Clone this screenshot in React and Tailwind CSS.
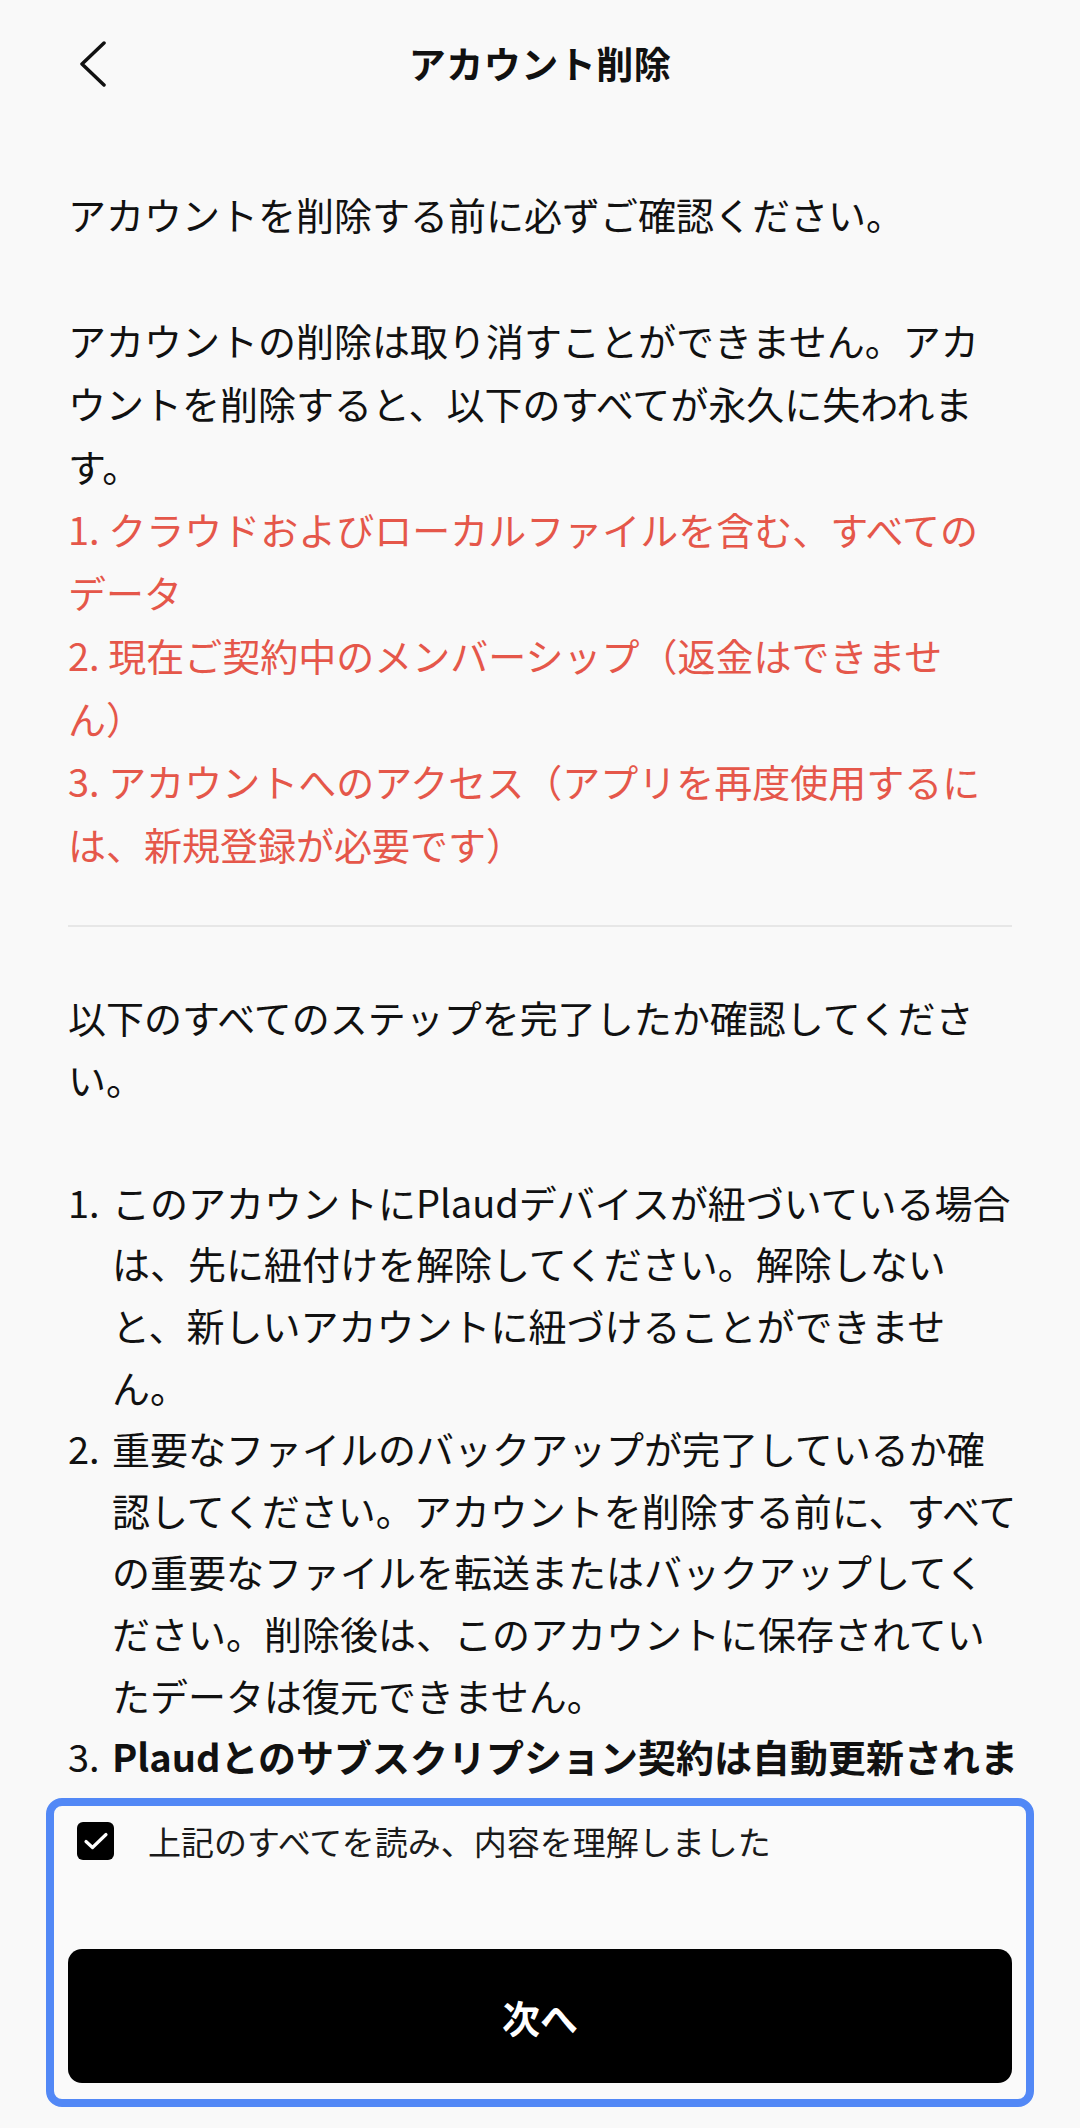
import React, { useState } from "react";

const jp = "font-['Noto_Sans_CJK_JP','Noto_Sans',sans-serif]";

function BackIcon() {
  return (
    <svg width="28" height="46" viewBox="0 0 28 46" fill="none">
      <path
        d="M24 2 L2 23 L24 44"
        stroke="#111"
        strokeWidth="3.5"
        strokeLinecap="round"
        strokeLinejoin="round"
      />
    </svg>
  );
}

function Step({ num, children, bold }) {
  return (
    <div className="flex">
      <span className="w-[44px] shrink-0">{num}</span>
      <span className={`flex-1 whitespace-pre ${bold ? "font-bold" : ""}`}>{children}</span>
    </div>
  );
}

export default function App() {
  const [checked, setChecked] = useState(true);

  return (
    <div
      className={`${jp} w-[1080px] h-[2128px] bg-[#f9f9f9] text-[#111] flex flex-col overflow-hidden`}
    >
      {/* header */}
      <header className="h-[128px] shrink-0 grid grid-cols-[1fr_auto_1fr] items-center">
        <button className="pl-[80px] justify-self-start">
          <BackIcon />
        </button>
        <h1 className="text-[37px] font-bold tracking-[0.5px]">アカウント削除</h1>
        <div />
      </header>

      {/* scrolling content */}
      <main className="flex-1 overflow-hidden px-[68px] pt-[54px] text-[38px]">
        <div className="leading-[63px] whitespace-pre">
          {"アカウントを削除する前に必ずご確認ください。\n\nアカウントの削除は取り消すことができません。アカ\nウントを削除すると、以下のすべてが永久に失われま\nす。"}
          <div className="text-[#e5574a]">
            {"1. クラウドおよびローカルファイルを含む、すべての\nデータ\n2. 現在ご契約中のメンバーシップ（返金はできませ\nん）\n3. アカウントへのアクセス（アプリを再度使用するに\nは、新規登録が必要です）"}
          </div>
        </div>

        <div className="h-[2px] bg-[#e7e7e7] mt-[50px] mb-[59px]" />

        <div className="leading-[61.6px]">
          <p className="whitespace-pre">
            {"以下のすべてのステップを完了したか確認してくださ\nい。"}
          </p>
          <div className="h-[61.6px]" />
          <Step num="1.">
            {"このアカウントにPlaudデバイスが紐づいている場合\nは、先に紐付けを解除してください。解除しない\nと、新しいアカウントに紐づけることができませ\nん。"}
          </Step>
          <Step num="2.">
            {"重要なファイルのバックアップが完了しているか確\n認してください。アカウントを削除する前に、すべて\nの重要なファイルを転送またはバックアップしてく\nださい。削除後は、このアカウントに保存されてい\nたデータは復元できません。"}
          </Step>
          <Step num="3." bold>
            {"Plaudとのサブスクリプション契約は自動更新されま\nす。"}
          </Step>
        </div>
      </main>

      {/* footer */}
      <footer className="shrink-0 px-[46px] pb-[21px]">
        <div className="border-[8px] border-[#5288f6] rounded-[16px] bg-[#fafafa] px-[14px] pt-[15px] pb-[16px]">
          <label className="flex items-center gap-[34px] pl-[9px] cursor-pointer">
            <button
              onClick={() => setChecked(!checked)}
              className={`w-[37px] h-[38px] rounded-[6px] flex items-center justify-center ${
                checked ? "bg-black" : "bg-white border-2 border-[#999]"
              }`}
            >
              {checked && (
                <svg width="26" height="20" viewBox="0 0 26 20" fill="none">
                  <path
                    d="M3 10.5 L9.5 16.5 L23 3.5"
                    stroke="#fff"
                    strokeWidth="3.2"
                    strokeLinecap="round"
                    strokeLinejoin="round"
                  />
                </svg>
              )}
            </button>
            <span className="text-[33px] text-[#1a1a1a] leading-[40px]">
              上記のすべてを読み、内容を理解しました
            </span>
          </label>

          <button className="mt-[88px] w-full h-[134px] rounded-[14px] bg-black text-white text-[38px] font-bold">
            次へ
          </button>
        </div>
      </footer>
    </div>
  );
}
